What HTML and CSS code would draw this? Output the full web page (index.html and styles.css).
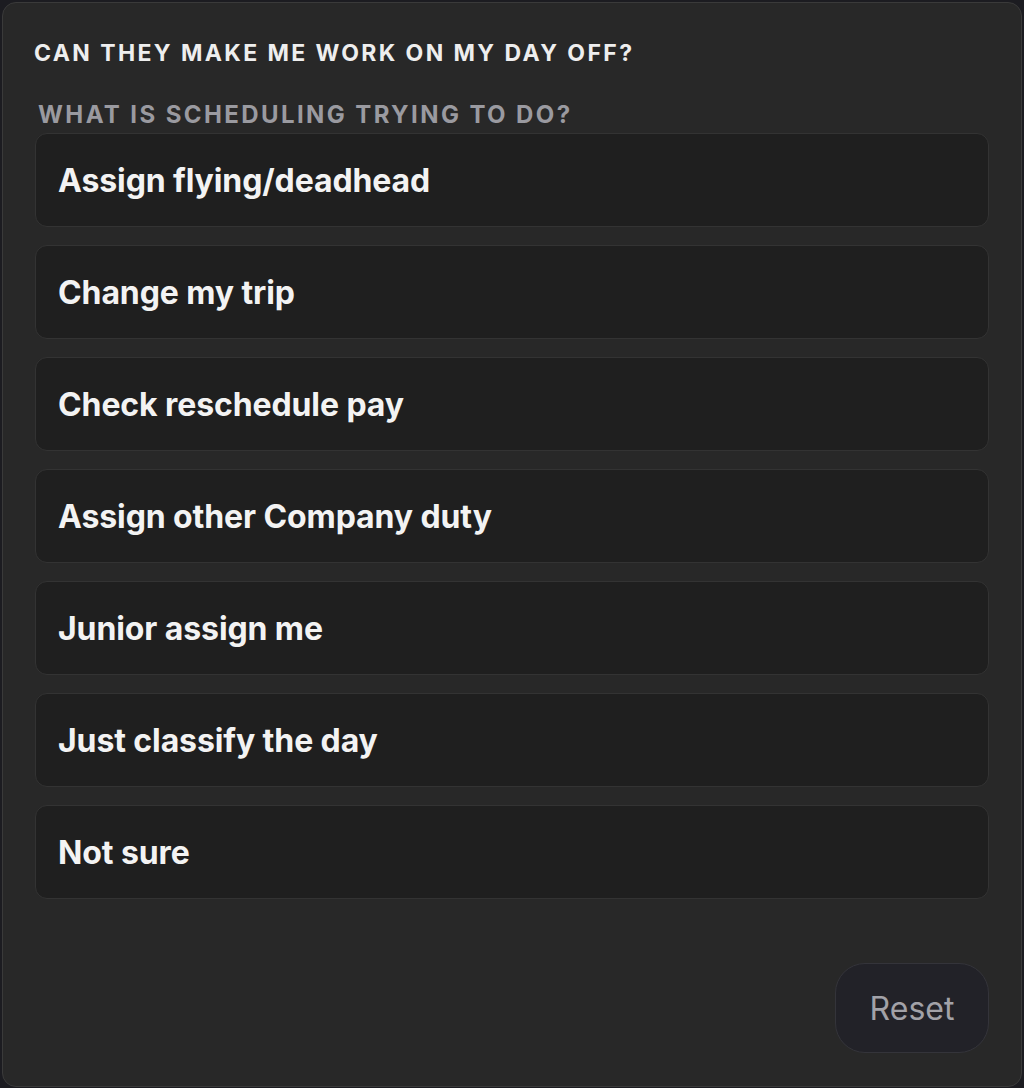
FILE: index.html
```html
<!DOCTYPE html>
<html lang="en">
<head>
<meta charset="utf-8">
<title>Can they make me work on my day off?</title>
<link rel="stylesheet" href="styles.css">
</head>
<body>
<main class="panel">
  <h1 class="title">CAN THEY MAKE ME WORK ON MY DAY OFF?</h1>
  <h2 class="subtitle">WHAT IS SCHEDULING TRYING TO DO?</h2>
  <div class="options">
    <button class="option">Assign flying/deadhead</button>
    <button class="option">Change my trip</button>
    <button class="option">Check reschedule pay</button>
    <button class="option">Assign other Company duty</button>
    <button class="option">Junior assign me</button>
    <button class="option">Just classify the day</button>
    <button class="option">Not sure</button>
  </div>
  <div class="footer">
    <button class="reset">Reset</button>
  </div>
</main>
</body>
</html>
```
FILE: styles.css
```css
* { box-sizing: border-box; }
html, body { height: 100%; }
body {
  margin: 0;
  padding: 2px 2px 1px 2px;
  background: #1c1c21;
  font-family: Inter, "Noto Sans", "Liberation Sans", sans-serif;
}
.panel {
  height: 100%;
  background: #282828;
  border: 1px solid #3a3a3a;
  border-radius: 14px;
  padding: 35px 32px 33px 31px;
  display: flex;
  flex-direction: column;
}
.title {
  margin: 0;
  color: #eeeeee;
  font-size: 23px;
  line-height: 30px;
  font-weight: 700;
  letter-spacing: 2.4px;
}
.subtitle {
  margin: 32px 0 0 4px;
  color: #9a9aa0;
  font-size: 24px;
  line-height: 30px;
  font-weight: 700;
  letter-spacing: 2.4px;
}
.options {
  margin-top: 3px;
  margin-left: 1px;
  display: flex;
  flex-direction: column;
  gap: 18px;
}
.option {
  display: block;
  width: 100%;
  height: 94px;
  margin: 0;
  padding: 0 22px;
  text-align: left;
  background: #1f1f1f;
  border: 1px solid #333333;
  border-radius: 12px;
  color: #f3f3f3;
  font-family: inherit;
  font-size: 32px;
  font-weight: 700;
  letter-spacing: -0.1px;
}
.footer {
  margin-top: auto;
  display: flex;
  justify-content: flex-end;
}
.reset {
  width: 154px;
  height: 90px;
  background: #222228;
  border: 1px solid #34343a;
  border-radius: 30px;
  color: #a2a2a8;
  font-family: inherit;
  font-size: 32px;
  font-weight: 400;
}
```
